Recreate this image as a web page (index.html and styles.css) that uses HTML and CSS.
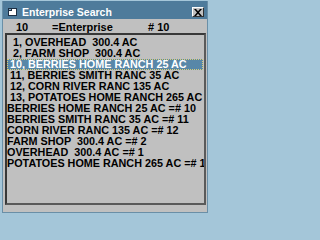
FILE: index.html
```html
<!DOCTYPE html>
<html>
<head>
<meta charset="utf-8">
<link rel="stylesheet" href="styles.css">
</head>
<body>
<div class="window">
  <div class="inner">
    <div class="titlebar">
      <svg class="appicon" width="9" height="8" viewBox="0 0 9 8">
        <rect x="0.5" y="0.5" width="8" height="7" fill="#ffffff" stroke="#1c2f44"/>
        <rect x="0" y="0" width="4" height="3" fill="#1c2f44"/>
        <rect x="1" y="1" width="2" height="1" fill="#8fb0c8"/>
      </svg>
      <span class="title">Enterprise Search</span>
      <span class="close">
        <svg width="8" height="7" viewBox="0 0 8 7">
          <path d="M0 0h2l2 2.3L6 0h2L5 3.5 8 7H6L4 4.7 2 7H0l3-3.5z" fill="#000"/>
        </svg>
      </span>
    </div>
    <div class="header">
      <span>10</span>
      <span>=Enterprise</span>
      <span># 10</span>
    </div>
    <div class="listbox">
      <div class="row">  1, OVERHEAD  300.4 AC</div>
      <div class="row">  2, FARM SHOP  300.4 AC</div>
      <div class="row selected"> 10, BERRIES HOME RANCH 25 AC</div>
      <div class="row"> 11, BERRIES SMITH RANC 35 AC</div>
      <div class="row"> 12, CORN RIVER RANC 135 AC</div>
      <div class="row"> 13, POTATOES HOME RANCH 265 AC</div>
      <div class="row">BERRIES HOME RANCH 25 AC =# 10</div>
      <div class="row">BERRIES SMITH RANC 35 AC =# 11</div>
      <div class="row">CORN RIVER RANC 135 AC =# 12</div>
      <div class="row">FARM SHOP  300.4 AC =# 2</div>
      <div class="row">OVERHEAD  300.4 AC =# 1</div>
      <div class="row">POTATOES HOME RANCH 265 AC =# 13</div>
    </div>
  </div>
</div>
</body>
</html>
```
FILE: styles.css
```css
html, body {
  margin: 0;
  padding: 0;
  background: #a4c6d9;
}
.window {
  box-sizing: border-box;
  width: 210px;
  height: 216px;
  border: 2px solid #a4c6d9;
  border-top-width: 1px;
  border-bottom-width: 3px;
  background: #c0c0c0;
  font-family: "Liberation Sans", Arial, sans-serif;
}
.inner {
  box-sizing: border-box;
  height: 100%;
  border: 1px solid #6a8fa7;
  border-top: none;
  display: flex;
  flex-direction: column;
}
.titlebar {
  height: 18px;
  background: #4e7b9b;
  display: flex;
  align-items: center;
  padding-top: 5px;
  box-sizing: border-box;
  padding-left: 5px;
}
.appicon {
  display: block;
  margin-top: -1px;
}
.title {
  color: #ffffff;
  font-weight: bold;
  font-size: 10.5px;
  line-height: 11px;
  margin-left: 5px;
}
.close {
  margin-left: auto;
  margin-right: 3px;
  width: 12px;
  height: 10px;
  box-sizing: border-box;
  background: #c0c0c0;
  border-top: 1px solid #ffffff;
  border-left: 1px solid #ffffff;
  border-right: 1px solid #303030;
  border-bottom: 1px solid #303030;
  display: flex;
  align-items: center;
  justify-content: center;
  margin-top: -1px;
}
.close svg {
  display: block;
}
.header {
  height: 14px;
  box-sizing: border-box;
  padding-top: 3px;
  padding-left: 13px;
  display: grid;
  grid-template-columns: 36px 96px auto;
  font-weight: bold;
  font-size: 11px;
  line-height: 11px;
  color: #000;
}
.listbox {
  margin: 0 1px 0 2px;
  height: 172px;
  box-sizing: border-box;
  border: 2px solid #5a5a5a;
  border-top-color: #383838;
  border-left-color: #383838;
  padding-top: 2px;
  overflow: hidden;
}
.row {
  height: 11px;
  line-height: 11px;
  font-size: 10.8px;
  font-weight: bold;
  white-space: pre;
  color: #000;
  margin-right: 1px;
}
.row.selected {
  background: #5887a8;
  color: #ffffff;
  outline: 1px dotted #d9cc78;
  outline-offset: -1px;
}
```
